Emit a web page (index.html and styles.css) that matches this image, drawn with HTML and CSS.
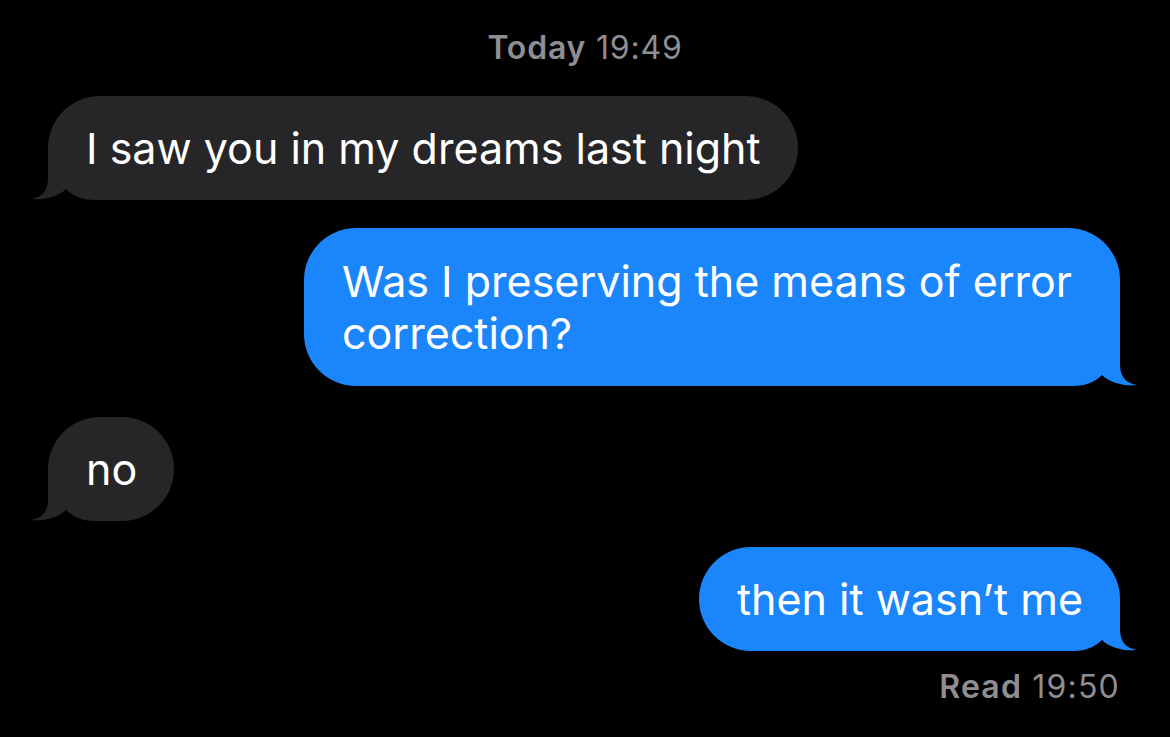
FILE: index.html
```html
<!DOCTYPE html>
<html>
<head>
<meta charset="utf-8">
<link rel="stylesheet" href="styles.css">
</head>
<body>
<div class="thread">
  <div class="stamp"><b>Today</b> 19:49</div>
  <div class="row in">
    <div class="bubble gray">I saw you in my dreams last night
      <svg class="tail" viewBox="0 0 72 52" width="72" height="52"><path d="M18,0 L18,30 C18,42 13,49 1,51 C13,52.5 28,49 36,41 C44,49 54,52 66,52 L72,52 L72,0 Z"/></svg>
    </div>
  </div>
  <div class="row out gap-a">
    <div class="bubble blue tall">Was I preserving the means of error correction?
      <svg class="tail" viewBox="0 0 72 52" width="72" height="52"><path d="M18,0 L18,30 C18,42 13,49 1,51 C13,52.5 28,49 36,41 C44,49 54,52 66,52 L72,52 L72,0 Z"/></svg>
    </div>
  </div>
  <div class="row in gap-b">
    <div class="bubble gray">no
      <svg class="tail" viewBox="0 0 72 52" width="72" height="52"><path d="M18,0 L18,30 C18,42 13,49 1,51 C13,52.5 28,49 36,41 C44,49 54,52 66,52 L72,52 L72,0 Z"/></svg>
    </div>
  </div>
  <div class="row out gap-c">
    <div class="bubble blue">then it wasn’t me
      <svg class="tail" viewBox="0 0 72 52" width="72" height="52"><path d="M18,0 L18,30 C18,42 13,49 1,51 C13,52.5 28,49 36,41 C44,49 54,52 66,52 L72,52 L72,0 Z"/></svg>
    </div>
  </div>
  <div class="read"><b>Read</b> 19:50</div>
</div>
</body>
</html>
```
FILE: styles.css
```css
html, body {
  margin: 0;
  padding: 0;
  background: #000;
}
body {
  width: 1170px;
  height: 737px;
  overflow: hidden;
  font-family: Inter, "Noto Sans", sans-serif;
}
.thread {
  display: flex;
  flex-direction: column;
  padding: 28px 50px 0 48px;
}
.stamp {
  text-align: center;
  color: #8e8e93;
  font-size: 32px;
  line-height: 40px;
  letter-spacing: 0.8px;
  margin-bottom: 28px;
  padding-left: 2px;
}
.stamp b, .read b {
  font-weight: 600;
}
.row {
  display: flex;
}
.row.in {
  justify-content: flex-start;
}
.row.out {
  justify-content: flex-end;
}
.gap-a {
  margin-top: 28px;
}
.gap-b {
  margin-top: 31px;
}
.gap-c {
  margin-top: 26px;
}
.bubble {
  position: relative;
  z-index: 0;
  max-width: 741px;
  padding: 26px 37px 26px 38px;
  border-radius: 52px;
  font-size: 43px;
  line-height: 52px;
  color: #fff;
}
.bubble.tall {
  padding-top: 27px;
  padding-bottom: 27px;
}
.bubble.gray {
  background: #262629;
}
.bubble.blue {
  background: #1b86fb;
}
.tail {
  position: absolute;
  z-index: -1;
  bottom: 0;
  display: block;
}
.gray .tail {
  left: -18px;
  fill: #262629;
}
.blue .tail {
  right: -18px;
  fill: #1b86fb;
  transform: scaleX(-1);
}
.read {
  margin-top: 16px;
  text-align: right;
  color: #8e8e93;
  font-size: 32px;
  line-height: 40px;
  letter-spacing: 1.2px;
}
```
